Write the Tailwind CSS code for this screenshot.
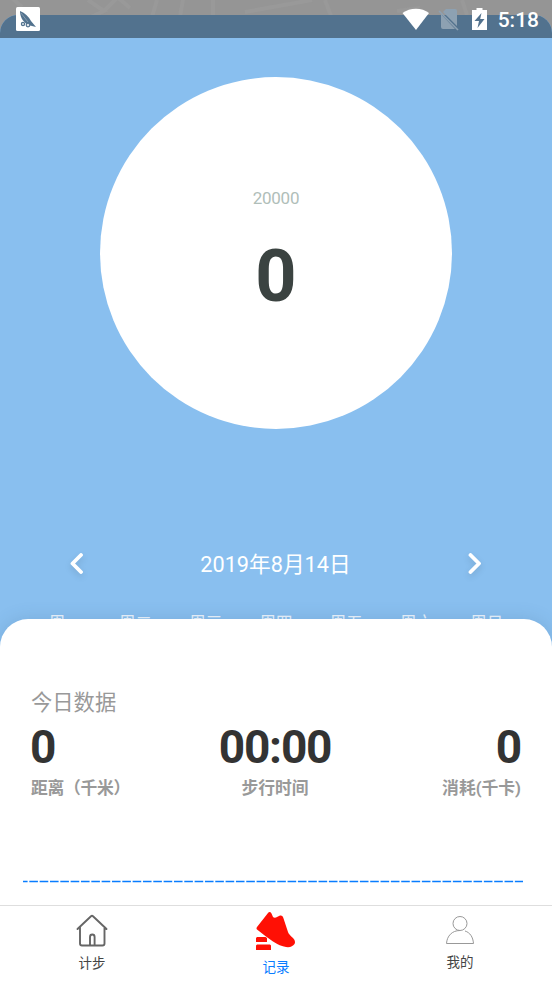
<!DOCTYPE html>
<html lang="zh-CN">
<head>
<meta charset="utf-8">
<title>记录</title>
<script src="https://cdn.jsdelivr.net/npm/@tailwindcss/browser@4"></script>
</head>
<body class="w-[552px] h-[981px] overflow-hidden bg-[#959595] font-[Roboto,'Noto_Sans_CJK_SC',sans-serif]">
<div class="relative flex flex-col w-[552px] h-[981px] overflow-hidden">
  <svg class="absolute left-0 top-0" width="552" height="40" fill="none" stroke="#999" stroke-width="4"><path d="M12 -2L22 7M88 0L104 11L91 17M104 11L116 -1M116 -4L130 8M157 0L152 17M183 0L180 16M213 0V16M245 12L312 0M325 0L331 16M397 11L420 8M462 0L467 15"/></svg>
  <header class="absolute inset-x-0 top-0 z-20 h-[38px] flex items-center pl-4 pr-[13px]">
    <svg width="24" height="24" viewBox="0 0 24 24"><rect width="24" height="24" rx="1.5" fill="#fff"/><path d="M4 4C9 6 13 10 15 14L20 20L12 18C6 14 4 9 4 4Z" fill="#52728e"/><path d="M5 6L12 15" stroke="#b5c3cf" stroke-width=".5"/><g fill="#dce3e9" stroke="#52728e" stroke-width="1.200"><circle cx="7" cy="17" r="1.600"/><circle cx="12" cy="18" r="1.800"/></g></svg>
    <div class="ml-auto flex items-center text-white">
      <svg width="28" height="24" viewBox="0 0 28 24"><path d="M.5 6C8 .2 20 .2 27 6L14 23Z" fill="#fff"/></svg>
      <svg class="ml-[8px]" width="21" height="24" viewBox="0 0 21 24"><path d="M8 2H17Q19 2 19 4V19L5 5ZM3 7L17 22H5Q3 22 3 20Z" fill="#8da1b2"/><path d="M1 4L20 23" stroke="#8da1b2" stroke-width="1.600"/></svg>
      <svg class="ml-[13px]" width="16" height="24" viewBox="0 0 16 24"><path d="M4.500 1H10.500V3H15V23H0V3H4.500Z" fill="#fff"/><path d="M9.500 6L2.500 14H7L5.500 21L12.500 12H8.200Z" fill="#52728e"/></svg>
      <span class="ml-[10px] mt-[1px] text-[21px] leading-6 font-medium">5:18</span>
    </div>
  </header>
  <main class="relative mt-[15px] h-[640px] shrink-0 rounded-t-[18px] bg-[#89bfef] overflow-hidden flex flex-col items-center">
    <div class="absolute inset-x-0 top-0 h-[23px] bg-[#52728e]"></div>
    <section class="relative mt-[62px] w-[352px] h-[352px] shrink-0 rounded-full bg-white flex flex-col items-center">
      <p class="mt-[109px] text-[17px] leading-6 tracking-[-0.3px] text-[#b0beb9]">20000</p>
      <p class="mt-[27px] text-[72px] leading-[80px] font-bold text-[#3b4341]">0</p>
    </section>
    <nav class="mt-[116px] w-full px-[64px] flex justify-between items-center h-[38px] text-white">
      <svg class="drop-shadow-md" width="26" height="26" viewBox="0 0 26 26" fill="none" stroke="#fff" stroke-width="3.800" stroke-linecap="round" stroke-linejoin="round"><path d="M17 4L8.500 12.500L17 21"/></svg>
      <span class="pt-[2px] pr-[1px] text-[21.700px] leading-8">2019年8月14日</span>
      <svg class="drop-shadow-md" width="26" height="26" viewBox="0 0 26 26" fill="none" stroke="#fff" stroke-width="3.800" stroke-linecap="round" stroke-linejoin="round"><path d="M8.500 4L17 12.500L8.500 21"/></svg>
    </nav>
    <div class="mt-[29px] w-full pl-[30px] pr-[30px] grid grid-cols-7 text-center text-[16.500px] leading-6 text-white/85">
      <span>周一</span><span>周二</span><span>周三</span><span>周四</span><span>周五</span><span>周六</span><span>周日</span>
    </div>
  </main>
  <section class="relative z-10 -mt-[36px] h-[286px] shrink-0 rounded-t-[28px] bg-white shadow-[0_0_18px_rgba(50,90,130,0.18)] px-[31px] pt-[68px]">
    <h2 class="text-[21.300px] leading-8 text-[#999]">今日数据</h2>
    <div class="mt-[2px] flex justify-between text-[16.800px] leading-6 font-bold text-[#999]">
      <div><p class="mb-[3px] -ml-[1px] text-[46px] leading-[52px] tracking-[-1.200px] text-[#333]">0</p><p class="tracking-[-0.300px]">距离（千米）</p></div>
      <div class="absolute left-0 right-[2px] text-center"><p class="mb-[3px] text-[46px] leading-[52px] tracking-[-1.200px] text-[#333]">00:00</p><p>步行时间</p></div>
      <div class="text-right"><p class="mb-[3px] text-[46px] leading-[52px] tracking-[-1.200px] text-[#333]">0</p><p>消耗(千卡)</p></div>
    </div>
    <svg class="absolute left-[23px] top-[261px]" width="501" height="3"><path d="M0 1.500H500" stroke="#087dff" stroke-width="1.600" stroke-dasharray="8.600 1.730" stroke-dashoffset="4"/></svg>
  </section>
  <footer class="relative z-20 h-[76px] shrink-0 border-t border-[#dedede] bg-white grid grid-cols-3 text-[13.500px] leading-5 text-[#444]">
    <a class="flex flex-col items-center pt-[8px]"><svg width="32" height="34" viewBox="0 0 32 34" fill="none" stroke="#666" stroke-width="1.900" stroke-linecap="round" stroke-linejoin="round"><path d="M1.500 15L15 2.200Q16 1.300 17 2.200L30.500 15M4 13V29.500Q4 31.500 6 31.500H26.500Q28.500 31.500 28.500 29.500V13M14 31V23Q14 20.500 16.300 20.500T18.600 23V31"/></svg><span class="mt-[5px]">计步</span></a>
    <a class="flex flex-col items-center pt-[6px] text-[#087dff]"><svg class="-ml-[1px]" width="40" height="39" viewBox="0 0 40 39" fill="#ff1005"><path d="M1 15L12 1Q13.800 -1 15.500 1.500L17 5Q18 6 20 5.500L24 3.500Q26.500 3 27.200 5.500L32 20Q32.500 22 37 26Q40 29 38.500 32Q36 35.800 30 35Q24 34 17 29.500Q9 24 1 17.500Q0 16.500 1 15Z"/><path d="M1 25H9.500L11 26V30H0V26ZM1 32.500H14L15 33.500V38H0V33.500Z"/></svg><span class="mt-[6px]">记录</span></a>
    <a class="flex flex-col items-center pt-[9px]"><svg width="28" height="32" viewBox="0 0 28 32" fill="none" stroke="#999" stroke-width="1"><circle cx="14" cy="8.500" r="7"/><path d="M14 15.500C6 15.500 1 21 .5 28.500H27.500C27 22 24 17.500 19 16"/></svg><span class="mt-[5px]">我的</span></a>
  </footer>
</div>
</body>
</html>
